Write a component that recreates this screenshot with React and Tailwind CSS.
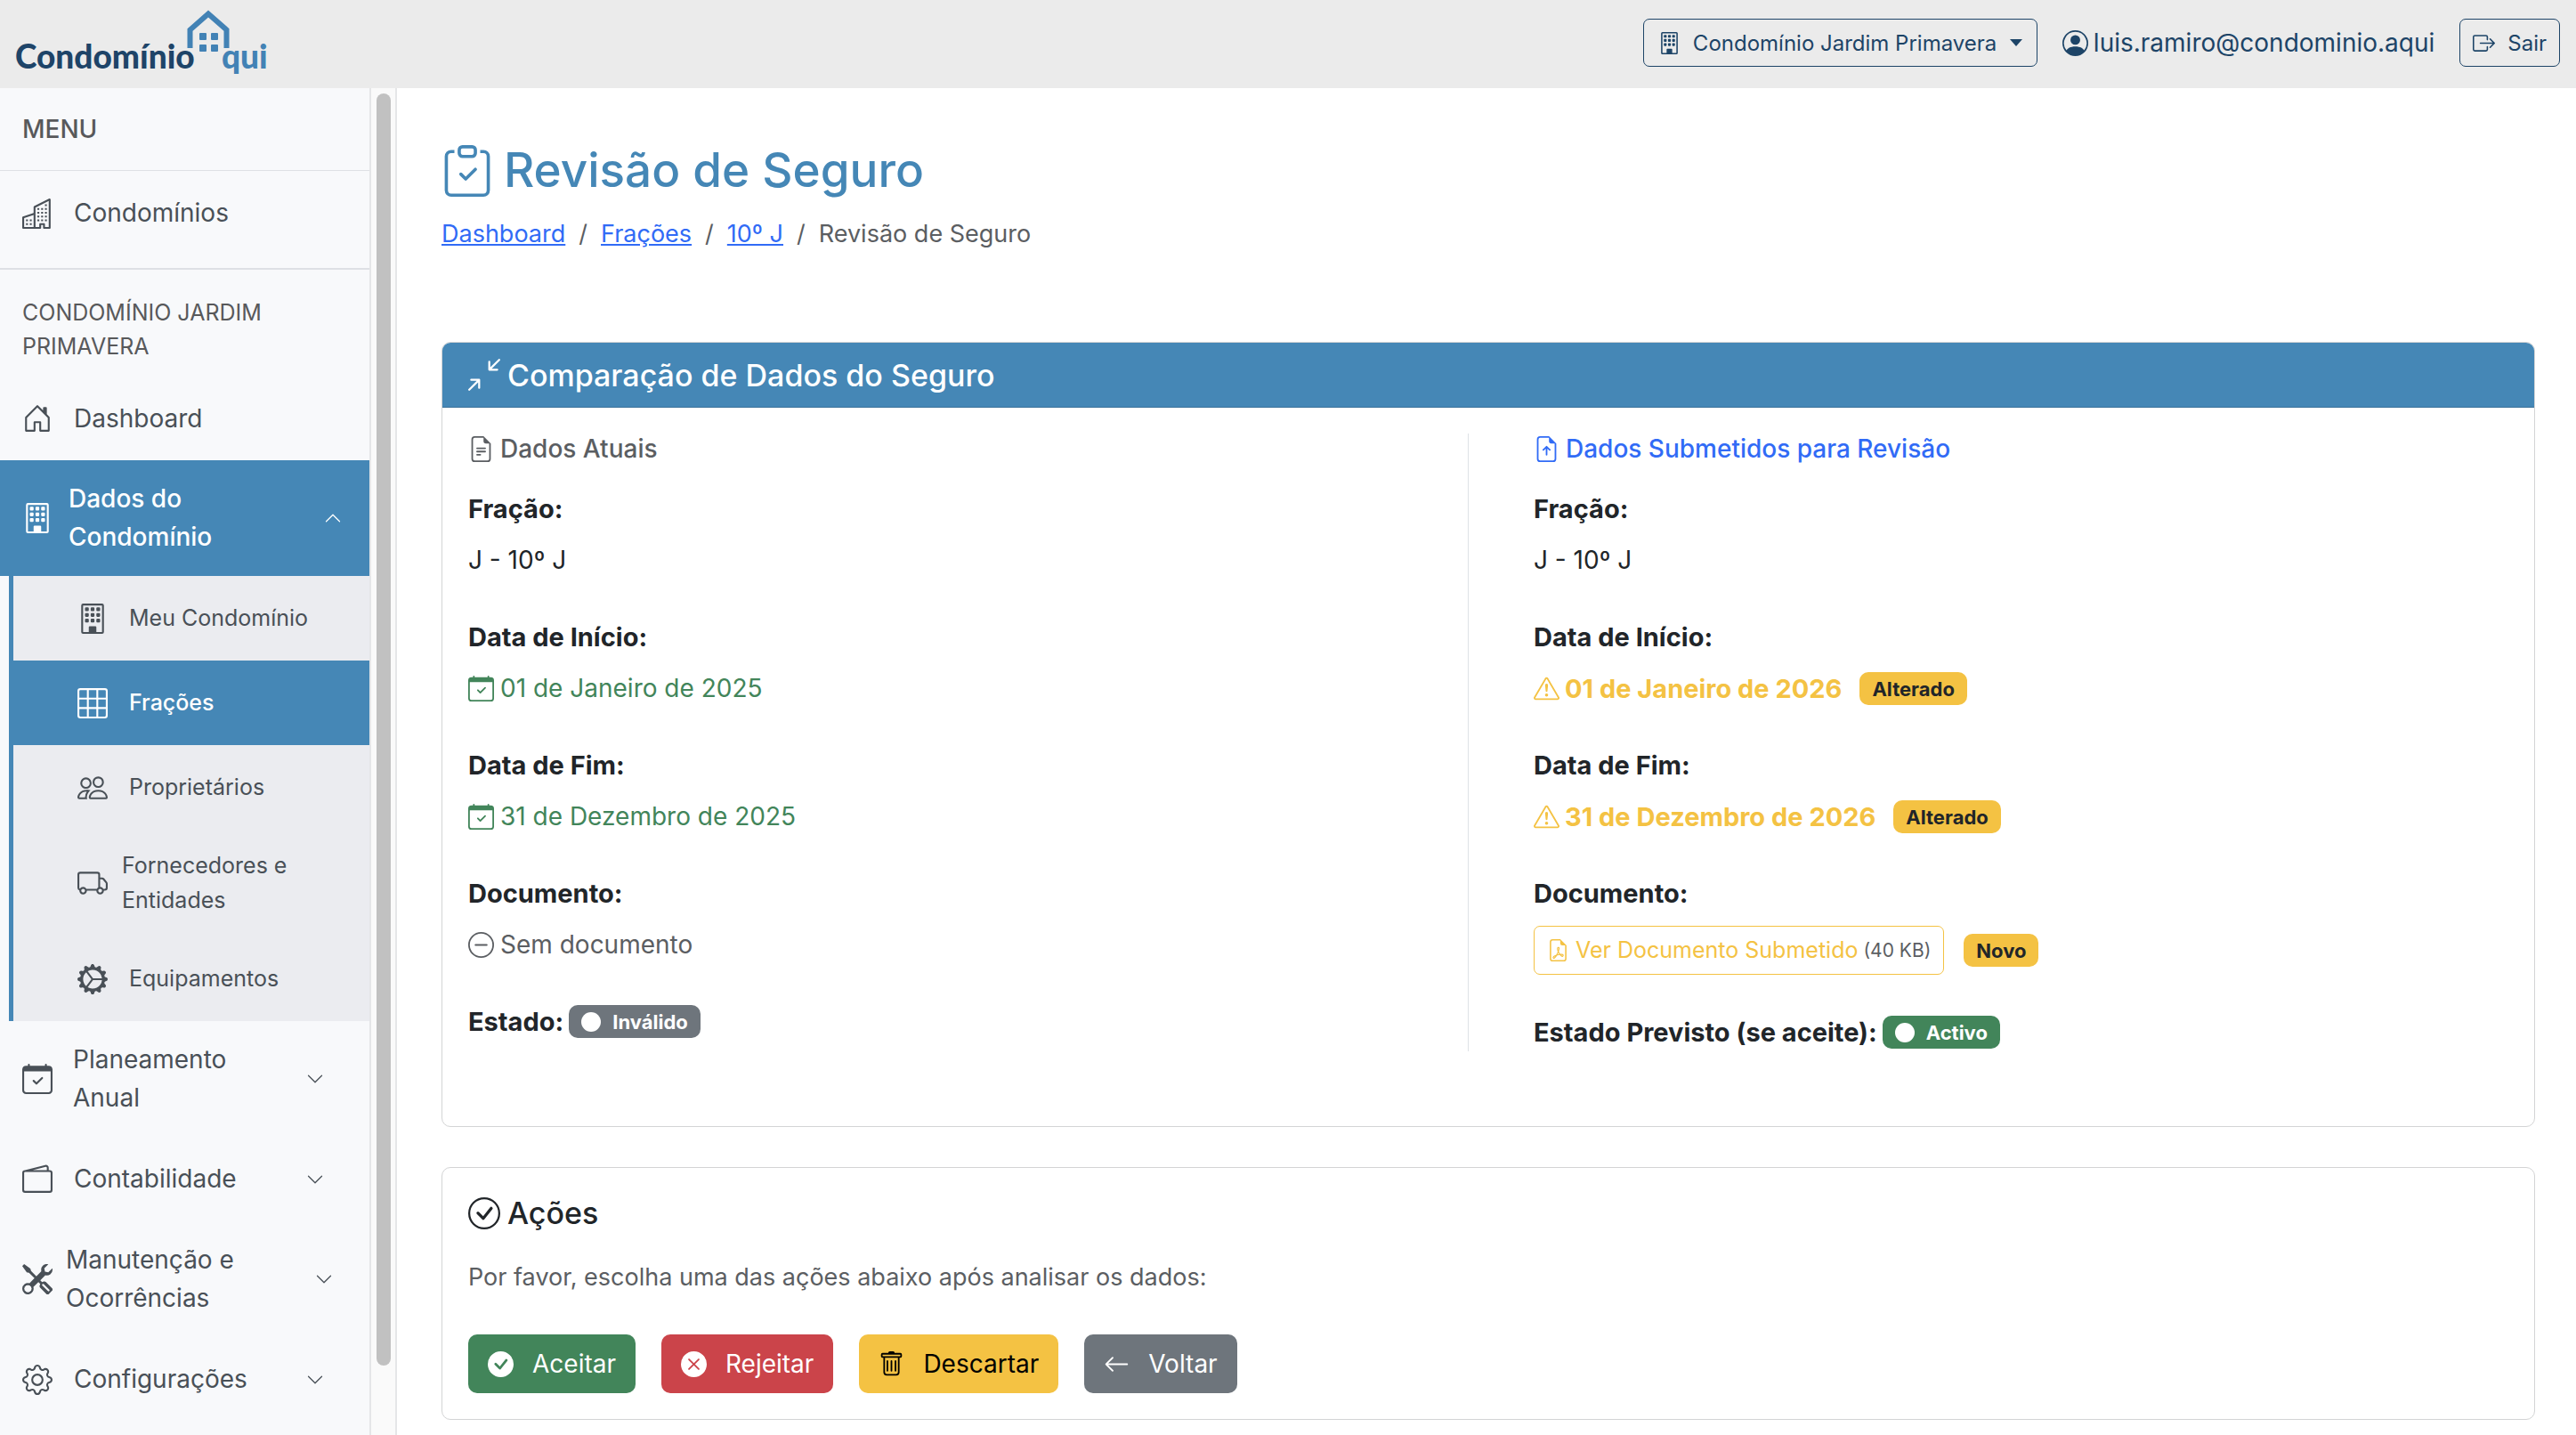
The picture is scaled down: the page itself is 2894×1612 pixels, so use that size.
import React from 'react'
import {
    BsArrowLeft,
    BsArrowsAngleContract,
    BsBoxArrowRight,
    BsBuilding,
    BsBuildings,
    BsCalendarCheck,
    BsCheckCircle,
    BsCheckCircleFill,
    BsChevronDown,
    BsChevronUp,
    BsCircleFill,
    BsClipboardCheck,
    BsDashCircle,
    BsExclamationTriangle,
    BsFileEarmarkArrowUp,
    BsFileEarmarkPdf,
    BsFileEarmarkText,
    BsGear,
    BsGearWideConnected,
    BsGrid3X3,
    BsHouseDoor,
    BsPeople,
    BsPersonCircle,
    BsTools,
    BsTrash,
    BsTruck,
    BsWallet2,
    BsXCircleFill,
} from 'react-icons/bs'

function Logo() {
    return (
        <svg className="h-[99px] w-[310px]" viewBox="0 0 310 99" role="img" aria-label="CondomínioAqui">
            <text x="17" y="77" fontFamily="Lato, sans-serif" fontWeight="900" fontSize="37" fill="#1e4468">Condomínio</text>
            <path d="M213.500 54V33.500L234 15.500L254.500 33.500V54" fill="none" stroke="#4282b5" strokeWidth="6" />
            <g fill="#4282b5">
                <rect x="224" y="37" width="8" height="8" rx="1" />
                <rect x="237" y="37" width="8" height="8" rx="1" />
                <rect x="224" y="50" width="8" height="8" rx="1" />
                <rect x="237" y="50" width="8" height="8" rx="1" />
            </g>
            <text x="249" y="77" fontFamily="Lato, sans-serif" fontWeight="900" fontSize="37" fill="#4282b5">qui</text>
        </svg>
    )
}

function Header() {
    return (
        <header className="flex h-[99px] items-center justify-between bg-[#ebebeb] pr-[18px] text-[#1d4467]">
            <a href="#inicio"><Logo /></a>
            <div className="flex items-center gap-[28px] pb-[3px]">
                <label className="flex h-[54px] items-center rounded-[7px] border border-[#1d4467] px-[16px] text-[24px]">
                    <BsBuilding className="size-[25px]" />
                    <select aria-label="Condomínio" className="ml-[14px] appearance-none bg-transparent outline-none">
                        <option>Condomínio Jardim Primavera</option>
                    </select>
                    <svg className="ml-[14px] h-[8px] w-[14px]" viewBox="0 0 14 8" fill="currentColor">
                        <path d="M0 0h14L7 8z" />
                    </svg>
                </label>
                <a href="#perfil" className="flex items-center gap-[6px] text-[28px]">
                    <BsPersonCircle className="size-[29px]" />
                    luis.ramiro@condominio.aqui
                </a>
                <button className="flex h-[54px] items-center gap-[14px] rounded-[7px] border border-[#1d4467] px-[14px] text-[24px]">
                    <BsBoxArrowRight className="size-[25px]" />
                    Sair
                </button>
            </div>
        </header>
    )
}

const subItems = [
    { label: 'Meu Condomínio', icon: BsBuilding },
    { label: 'Frações', icon: BsGrid3X3, active: true },
    { label: 'Proprietários', icon: BsPeople },
    { label: 'Fornecedores e Entidades', icon: BsTruck, gap: 'gap-[16px]' },
    { label: 'Equipamentos', icon: BsGearWideConnected },
]

const groups = [
    { label: 'Planeamento Anual', icon: BsCalendarCheck, gap: 'gap-[23px] pr-[51px]' },
    { label: 'Contabilidade', icon: BsWallet2, gap: 'gap-[24px] pr-[51px]' },
    { label: 'Manutenção e Ocorrências', icon: BsTools, gap: 'gap-[15px] pr-[41px]' },
    { label: 'Configurações', icon: BsGear, gap: 'gap-[24px] pr-[51px]' },
]

function Sidebar() {
    return (
        <aside className="flex shrink-0">
            <nav className="w-[417px] border-r-2 border-[#e5e6e8] bg-[#f8f9fb] text-[28px] leading-[43px] text-[#495057]">
                <h2 className="flex h-[93px] items-center border-b border-[#dee0e5] pl-[25px] font-medium text-[#58595b]">MENU</h2>
                <div className="border-b-2 border-[#dee0e5] pb-[14px]">
                    <a href="#condominios" className="flex h-[95px] items-center gap-[24px] pl-[25px]">
                        <BsBuildings className="size-[34px]" />
                        Condomínios
                    </a>
                </div>
                <h3 className="px-[25px] pt-[29px] pb-[15px] text-[25px] leading-[38px] text-[#58595b]">CONDOMÍNIO JARDIM PRIMAVERA</h3>
                <a href="#dashboard" className="flex h-[94px] items-center gap-[24px] pl-[25px]">
                    <BsHouseDoor className="size-[34px]" />
                    Dashboard
                </a>
                <button className="flex w-full items-center gap-[18px] bg-[#4587b6] py-[22px] pr-[31px] pl-[25px] text-left font-medium text-white">
                    <BsBuilding className="size-[34px] shrink-0" />
                    <span className="w-[200px]">Dados do Condomínio</span>
                    <BsChevronUp className="ml-auto size-[20px]" />
                </button>
                <ul className="ml-[10px] border-l-5 border-[#4587b6] bg-[#ebecf0] text-[25px] leading-[39px]">
                    {subItems.map(({ label, icon: Icon, active, gap = 'gap-[24px]' }) => (
                        <li key={label}>
                            <a
                                href="#menu"
                                className={`flex min-h-[95px] items-center py-[21px] pr-[60px] pl-[72px] ${gap} ${active ? 'bg-[#4587b6] font-medium text-white' : ''}`}
                            >
                                <Icon className="size-[34px] shrink-0" />
                                {label}
                            </a>
                        </li>
                    ))}
                </ul>
                {groups.map(({ label, icon: Icon, gap }) => (
                    <button key={label} className={`flex min-h-[95px] w-full items-center py-[22px] pl-[25px] text-left ${gap}`}>
                        <Icon className="size-[34px] shrink-0" />
                        <span className="w-[210px]">{label}</span>
                        <BsChevronDown className="ml-auto size-[20px]" />
                    </button>
                ))}
            </nav>
            <div className="flex w-[29px] border-r-2 border-[#e5e6e8] bg-[#fafafa] pt-[6px] pb-[78px] pl-[6px]">
                <div className="w-[16px] rounded-full bg-[#c1c1c1]" />
            </div>
        </aside>
    )
}

function Badge({ color, children }) {
    return (
        <span className={`flex h-[37px] items-center rounded-[10px] px-[14px] text-[22px] leading-none font-bold ${color}`}>
            {children}
        </span>
    )
}

function Field({ label, children }) {
    return (
        <div className="mb-[43px]">
            <dt className="mb-[15px] text-[29px] font-bold">{label}</dt>
            <dd className="flex min-h-[43px] items-center">{children}</dd>
        </div>
    )
}

function Comparison() {
    return (
        <section className="rounded-[10px] border border-[#d3d4d5]">
            <h2 className="flex h-[73px] items-center gap-[8px] rounded-t-[9px] border-b border-[#3a719a] bg-[#4587b6] px-[29px] text-[34px] font-medium text-white">
                <BsArrowsAngleContract className="size-[36px]" />
                Comparação de Dados do Seguro
            </h2>
            <div className="grid grid-cols-[1124fr_1168fr] px-[29px] pt-[29px] pb-[84px]">
                <div className="border-r border-[#dee2e6]">
                    <h3 className="mb-[28px] flex items-center gap-[7px] leading-[35px] font-medium text-[#5b5e62]">
                        <BsFileEarmarkText className="size-[29px]" />
                        Dados Atuais
                    </h3>
                    <dl>
                        <Field label="Fração:">J - 10º J</Field>
                        <Field label="Data de Início:">
                            <span className="flex items-center gap-[7px] text-[#42855a]">
                                <BsCalendarCheck className="size-[29px]" />
                                01 de Janeiro de 2025
                            </span>
                        </Field>
                        <Field label="Data de Fim:">
                            <span className="flex items-center gap-[7px] text-[#42855a]">
                                <BsCalendarCheck className="size-[29px]" />
                                31 de Dezembro de 2025
                            </span>
                        </Field>
                        <Field label="Documento:">
                            <span className="flex items-center gap-[7px] text-[#5b5e62]">
                                <BsDashCircle className="size-[29px]" />
                                Sem documento
                            </span>
                        </Field>
                        <div className="flex items-center gap-[6px]">
                            <dt className="text-[29px] font-bold">Estado:</dt>
                            <dd>
                                <Badge color="bg-[#6e757c] text-white">
                                    <BsCircleFill className="mr-[13px] size-[22px]" />
                                    Inválido
                                </Badge>
                            </dd>
                        </div>
                    </dl>
                </div>
                <div className="pl-[73px]">
                    <h3 className="mb-[28px] flex items-center gap-[7px] leading-[35px] font-medium text-[#316bf6]">
                        <BsFileEarmarkArrowUp className="size-[29px]" />
                        Dados Submetidos para Revisão
                    </h3>
                    <dl>
                        <Field label="Fração:">J - 10º J</Field>
                        <Field label="Data de Início:">
                            <span className="mr-[20px] flex items-center gap-[6px] text-[29px] font-bold text-[#f4c243]">
                                <BsExclamationTriangle className="size-[29px]" />
                                01 de Janeiro de 2026
                            </span>
                            <Badge color="bg-[#f4c243] text-[#212529]">Alterado</Badge>
                        </Field>
                        <Field label="Data de Fim:">
                            <span className="mr-[20px] flex items-center gap-[6px] text-[29px] font-bold text-[#f4c243]">
                                <BsExclamationTriangle className="size-[29px]" />
                                31 de Dezembro de 2026
                            </span>
                            <Badge color="bg-[#f4c243] text-[#212529]">Alterado</Badge>
                        </Field>
                        <Field label="Documento:">
                            <a href="#documento" className="mr-[22px] flex h-[55px] items-center rounded-[7px] border border-[#f4c243] px-[14px] text-[25px] text-[#f4c243]">
                                <BsFileEarmarkPdf className="mr-[7px] size-[25px]" />
                                Ver Documento Submetido
                                <small className="ml-[6px] text-[21px] text-[#5b5e62]">(40 KB)</small>
                            </a>
                            <Badge color="bg-[#f4c243] text-[#212529]">Novo</Badge>
                        </Field>
                        <div className="flex items-center gap-[6px]">
                            <dt className="text-[29px] font-bold">Estado Previsto (se aceite):</dt>
                            <dd>
                                <Badge color="bg-[#42855a] text-white">
                                    <BsCircleFill className="mr-[13px] size-[22px]" />
                                    Activo
                                </Badge>
                            </dd>
                        </div>
                    </dl>
                </div>
            </div>
        </section>
    )
}

const actions = [
    { label: 'Aceitar', icon: BsCheckCircleFill, color: 'bg-[#42855a] text-white' },
    { label: 'Rejeitar', icon: BsXCircleFill, color: 'bg-[#cb444a] text-white' },
    { label: 'Descartar', icon: BsTrash, color: 'bg-[#f4c243] text-black' },
    { label: 'Voltar', icon: BsArrowLeft, color: 'bg-[#6e757c] text-white' },
]

function Actions() {
    return (
        <section className="mt-[45px] rounded-[10px] border border-[#d3d4d5] p-[29px]">
            <h2 className="mb-[29px] flex items-center gap-[8px] text-[34px] font-medium">
                <BsCheckCircle className="size-[36px]" />
                Ações
            </h2>
            <p className="mb-[43px] text-[27px] text-[#5b5e62]">Por favor, escolha uma das ações abaixo após analisar os dados:</p>
            <div className="flex gap-[29px]">
                {actions.map(({ label, icon: Icon, color }) => (
                    <button key={label} className={`flex h-[66px] items-center gap-[21px] rounded-[10px] px-[22px] ${color}`}>
                        <Icon className="size-[29px]" />
                        {label}
                    </button>
                ))}
            </div>
        </section>
    )
}

export default function App() {
    return (
        <div className="flex min-h-screen flex-col bg-white font-[Inter,sans-serif] text-[28px] leading-[43px] text-[#212529]">
            <Header />
            <div className="flex flex-1">
                <Sidebar />
                <main className="min-w-0 flex-1 pt-[58px] pr-[46px] pl-[50px]">
                    <h1 className="flex items-center gap-[12px] text-[53px] leading-[69px] font-medium text-[#4587b6]">
                        <BsClipboardCheck className="size-[58px]" />
                        Revisão de Seguro
                    </h1>
                    <nav className="mt-[15px] mb-[100px] flex gap-[15px] text-[27px] text-[#5b5e62]">
                        <a href="#dashboard" className="text-[#316bf6] underline">Dashboard</a>
                        <span>/</span>
                        <a href="#fracoes" className="text-[#316bf6] underline">Frações</a>
                        <span>/</span>
                        <a href="#fracao" className="text-[#316bf6] underline">10º J</a>
                        <span>/</span>
                        <span>Revisão de Seguro</span>
                    </nav>
                    <Comparison />
                    <Actions />
                </main>
            </div>
        </div>
    )
}
